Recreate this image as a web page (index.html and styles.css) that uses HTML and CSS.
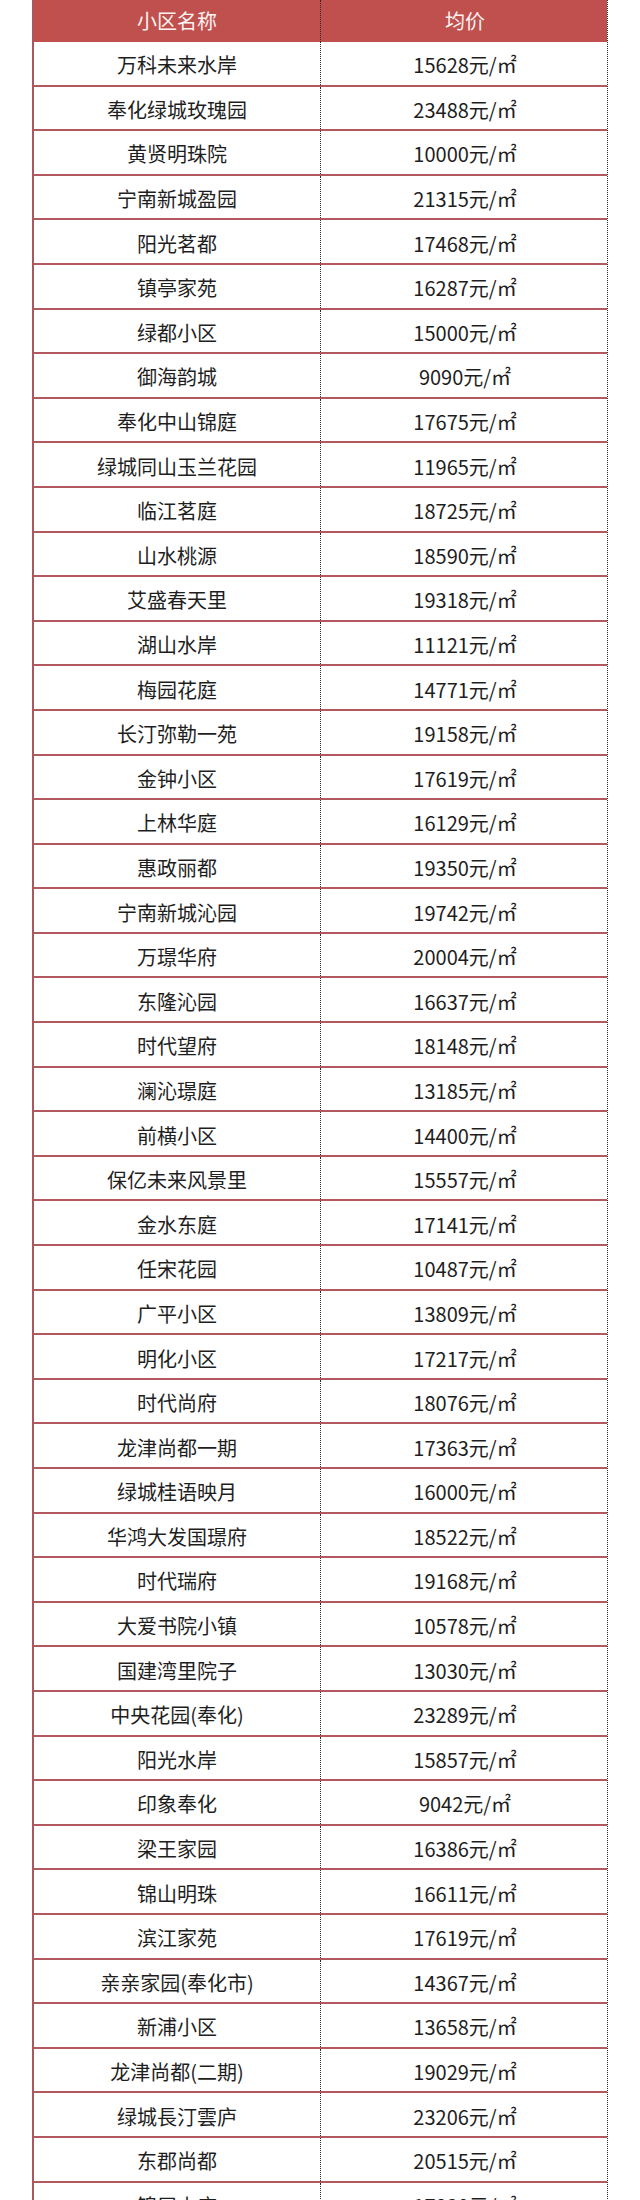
FILE: index.html
```html
<!DOCTYPE html>
<html lang="zh-CN">
<head>
<meta charset="utf-8">
<title>小区均价</title>
<link rel="stylesheet" href="styles.css">
</head>
<body>
<div class="table">
  <div class="row head"><div class="cell name">小区名称</div><div class="cell price">均价</div></div>
  <div class="row"><div class="cell name">万科未来水岸</div><div class="cell price">15628元/㎡</div></div>
  <div class="row"><div class="cell name">奉化绿城玫瑰园</div><div class="cell price">23488元/㎡</div></div>
  <div class="row"><div class="cell name">黄贤明珠院</div><div class="cell price">10000元/㎡</div></div>
  <div class="row"><div class="cell name">宁南新城盈园</div><div class="cell price">21315元/㎡</div></div>
  <div class="row"><div class="cell name">阳光茗都</div><div class="cell price">17468元/㎡</div></div>
  <div class="row"><div class="cell name">镇亭家苑</div><div class="cell price">16287元/㎡</div></div>
  <div class="row"><div class="cell name">绿都小区</div><div class="cell price">15000元/㎡</div></div>
  <div class="row"><div class="cell name">御海韵城</div><div class="cell price">9090元/㎡</div></div>
  <div class="row"><div class="cell name">奉化中山锦庭</div><div class="cell price">17675元/㎡</div></div>
  <div class="row"><div class="cell name">绿城同山玉兰花园</div><div class="cell price">11965元/㎡</div></div>
  <div class="row"><div class="cell name">临江茗庭</div><div class="cell price">18725元/㎡</div></div>
  <div class="row"><div class="cell name">山水桃源</div><div class="cell price">18590元/㎡</div></div>
  <div class="row"><div class="cell name">艾盛春天里</div><div class="cell price">19318元/㎡</div></div>
  <div class="row"><div class="cell name">湖山水岸</div><div class="cell price">11121元/㎡</div></div>
  <div class="row"><div class="cell name">梅园花庭</div><div class="cell price">14771元/㎡</div></div>
  <div class="row"><div class="cell name">长汀弥勒一苑</div><div class="cell price">19158元/㎡</div></div>
  <div class="row"><div class="cell name">金钟小区</div><div class="cell price">17619元/㎡</div></div>
  <div class="row"><div class="cell name">上林华庭</div><div class="cell price">16129元/㎡</div></div>
  <div class="row"><div class="cell name">惠政丽都</div><div class="cell price">19350元/㎡</div></div>
  <div class="row"><div class="cell name">宁南新城沁园</div><div class="cell price">19742元/㎡</div></div>
  <div class="row"><div class="cell name">万璟华府</div><div class="cell price">20004元/㎡</div></div>
  <div class="row"><div class="cell name">东隆沁园</div><div class="cell price">16637元/㎡</div></div>
  <div class="row"><div class="cell name">时代望府</div><div class="cell price">18148元/㎡</div></div>
  <div class="row"><div class="cell name">澜沁璟庭</div><div class="cell price">13185元/㎡</div></div>
  <div class="row"><div class="cell name">前横小区</div><div class="cell price">14400元/㎡</div></div>
  <div class="row"><div class="cell name">保亿未来风景里</div><div class="cell price">15557元/㎡</div></div>
  <div class="row"><div class="cell name">金水东庭</div><div class="cell price">17141元/㎡</div></div>
  <div class="row"><div class="cell name">任宋花园</div><div class="cell price">10487元/㎡</div></div>
  <div class="row"><div class="cell name">广平小区</div><div class="cell price">13809元/㎡</div></div>
  <div class="row"><div class="cell name">明化小区</div><div class="cell price">17217元/㎡</div></div>
  <div class="row"><div class="cell name">时代尚府</div><div class="cell price">18076元/㎡</div></div>
  <div class="row"><div class="cell name">龙津尚都一期</div><div class="cell price">17363元/㎡</div></div>
  <div class="row"><div class="cell name">绿城桂语映月</div><div class="cell price">16000元/㎡</div></div>
  <div class="row"><div class="cell name">华鸿大发国璟府</div><div class="cell price">18522元/㎡</div></div>
  <div class="row"><div class="cell name">时代瑞府</div><div class="cell price">19168元/㎡</div></div>
  <div class="row"><div class="cell name">大爱书院小镇</div><div class="cell price">10578元/㎡</div></div>
  <div class="row"><div class="cell name">国建湾里院子</div><div class="cell price">13030元/㎡</div></div>
  <div class="row"><div class="cell name">中央花园(奉化)</div><div class="cell price">23289元/㎡</div></div>
  <div class="row"><div class="cell name">阳光水岸</div><div class="cell price">15857元/㎡</div></div>
  <div class="row"><div class="cell name">印象奉化</div><div class="cell price">9042元/㎡</div></div>
  <div class="row"><div class="cell name">梁王家园</div><div class="cell price">16386元/㎡</div></div>
  <div class="row"><div class="cell name">锦山明珠</div><div class="cell price">16611元/㎡</div></div>
  <div class="row"><div class="cell name">滨江家苑</div><div class="cell price">17619元/㎡</div></div>
  <div class="row"><div class="cell name">亲亲家园(奉化市)</div><div class="cell price">14367元/㎡</div></div>
  <div class="row"><div class="cell name">新浦小区</div><div class="cell price">13658元/㎡</div></div>
  <div class="row"><div class="cell name">龙津尚都(二期)</div><div class="cell price">19029元/㎡</div></div>
  <div class="row"><div class="cell name">绿城長汀雲庐</div><div class="cell price">23206元/㎡</div></div>
  <div class="row"><div class="cell name">东郡尚都</div><div class="cell price">20515元/㎡</div></div>
  <div class="row"><div class="cell name">锦屏山庄</div><div class="cell price">17830元/㎡</div></div>
</div>
</body>
</html>
```
FILE: styles.css
```css
html, body {
  margin: 0;
  padding: 0;
  background: #ffffff;
}
body {
  font-family: "Noto Sans CJK SC", "Noto Sans", sans-serif;
  color: #1e1e1e;
  height: 2200px;
  overflow: hidden;
}
.table {
  margin-left: 32px;
  width: 576px;
  border-left: 2px solid #a9585e;
  border-right: 1px dotted #2a2a2a;
  box-sizing: border-box;
}
.row {
  display: grid;
  grid-template-columns: 287px 288px;
  height: 44.6px;
  box-sizing: border-box;
  border-bottom: 2px solid #b3585f;
}
.row.head {
  height: 42px;
  background: #c0504d;
  color: #fbf3f2;
  border-bottom: none;
}
.cell {
  display: flex;
  align-items: center;
  justify-content: center;
  box-sizing: border-box;
  padding-top: 4px;
  font-size: 20px;
  line-height: 1;
  white-space: nowrap;
}
.cell.name {
  border-right: 1px dotted #2a2a2a;
}
.row.head .cell {
  padding-top: 0;
  font-size: 20px;
}
```
